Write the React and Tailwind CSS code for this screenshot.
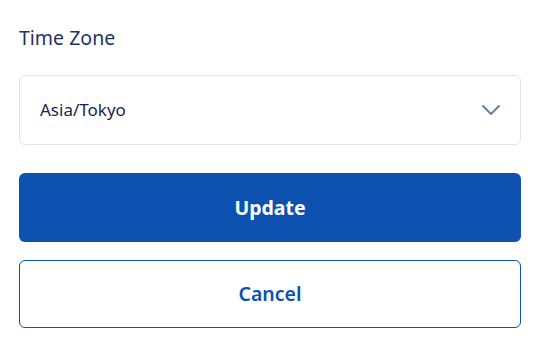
export default function App() {
  return (
    <div className="min-h-[355px] bg-white font-['Noto_Sans',sans-serif]">
      <div className="ml-[19px] w-[502px] pt-[24px]">
        <label className="block text-[19.5px] leading-[28px] text-[#1f3264]">Time Zone</label>
        <div className="mt-[23px] flex h-[70px] items-center justify-between rounded-[6px] border border-[#e3e3e3] pl-[20px] pr-[19px]">
          <span className="text-[17px] text-[#1a2550]">Asia/Tokyo</span>
          <svg width="20" height="12" viewBox="0 0 20 12" fill="none" className="text-[#6b7fa8]">
            <polyline points="2,2 10,10 18,2" stroke="currentColor" strokeWidth="2" strokeLinecap="round" strokeLinejoin="round" />
          </svg>
        </div>
        <button className="mt-[28px] flex h-[69px] w-full items-center justify-center rounded-[6px] bg-[#0d52b0] text-[19.5px] font-bold text-white">
          Update
        </button>
        <button className="mt-[18px] flex h-[68px] w-full items-center justify-center rounded-[6px] border border-[#0d52b0] bg-white text-[19.5px] font-semibold text-[#0d52b0]">
          Cancel
        </button>
      </div>
    </div>
  )
}
